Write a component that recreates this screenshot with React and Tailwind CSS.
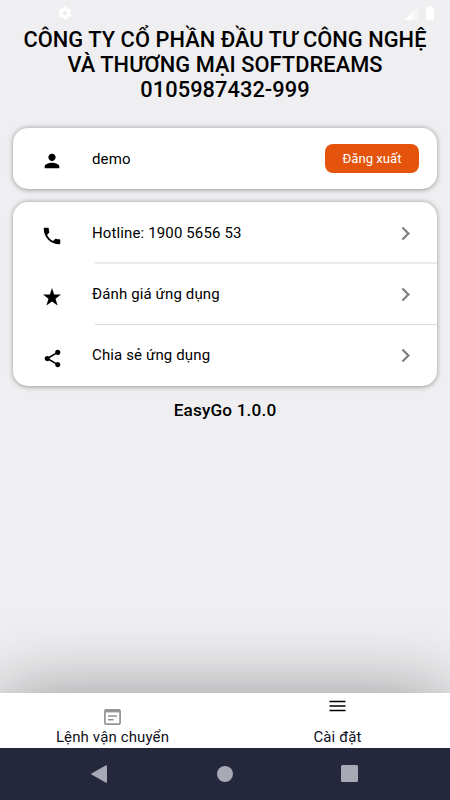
import React from 'react'
import {
  MdSettings,
  MdPerson,
  MdPhone,
  MdShare,
  MdChevronRight,
} from 'react-icons/md'

const StarIcon = () => (
  <svg width="18" height="18" viewBox="0 0 18 18" fill="currentColor">
    <path d="M9 0L11.1 6.5H18L12.5 10.7L14.6 17.6L9 13.4L3.4 17.6L5.5 10.7L0 6.5H6.9Z" />
  </svg>
)

const MENU = [
  { label: 'Hotline: 1900 5656 53', icon: <MdPhone size={22} /> },
  { label: 'Đánh giá ứng dụng', icon: <StarIcon /> },
  { label: 'Chia sẻ ứng dụng', icon: <MdShare size={21} /> },
]

function StatusBar() {
  return (
    <div className="flex h-[27px] items-start justify-between pl-[57px] pr-4 pt-[5px] text-white">
      <MdSettings size={16} />
      <div className="flex items-start gap-2 pt-px">
        <svg width="13" height="14" viewBox="0 0 13 14">
          <path d="M13 0V14H0Z" fill="#fff" fillOpacity="0.4" />
          <path d="M7.5 6V14H0Z" fill="#fff" />
        </svg>
        <svg width="8" height="14" viewBox="0 0 8 14" fill="currentColor">
          <path d="M2.5 0H5.5V1.5H7.2Q8 1.5 8 2.3V13.2Q8 14 7.2 14H0.8Q0 14 0 13.2V2.3Q0 1.5 0.8 1.5H2.5Z" />
        </svg>
      </div>
    </div>
  )
}

function MenuRow({ icon, label, first, last }) {
  return (
    <div className={`flex items-center pr-[18px] ${last ? 'h-[61px]' : 'h-[60px]'} ${first ? 'pt-[2px]' : ''}`}>
      <div className="flex w-[79px] justify-center pr-px pt-1.5">{icon}</div>
      <span className="flex-1 text-[15px] tracking-[0.13px]">{label}</span>
      <MdChevronRight size={27} className="text-[#808080]" />
    </div>
  )
}

function TabBar() {
  return (
    <nav className="flex h-[54.5px] bg-white text-[15px] tracking-[0.13px] text-[#10101c]">
      <div className="flex flex-1 flex-col items-center pt-4">
        <svg width="17" height="16" viewBox="0 0 17 16" fill="none" className="shrink-0 text-[#949494]">
          <rect x="0.9" y="0.9" width="15.2" height="14.2" rx="1.2" stroke="currentColor" strokeWidth="1.7" />
          <path d="M1 0.5H16V3.4H1Z" fill="currentColor" />
          <path d="M4 7H13M4 10.7H9.5" stroke="currentColor" strokeWidth="1.6" />
        </svg>
        <span className="mt-[2px] leading-5">Lệnh vận chuyển</span>
      </div>
      <div className="flex flex-1 flex-col items-center pt-[7px]">
        <svg width="17" height="12" viewBox="0 0 17 12" fill="none" className="shrink-0 text-black">
          <path d="M0.5 1.5H16.5M0.5 6H16.5M0.5 10.5H16.5" stroke="currentColor" strokeWidth="1.4" />
        </svg>
        <span className="mt-[15px] leading-5">Cài đặt</span>
      </div>
    </nav>
  )
}

function SystemNav() {
  return (
    <div className="flex flex-1 items-center justify-between bg-[#25273d] pl-[91px] pr-[92px] text-[#a9a9b5]">
      <svg width="16" height="18" viewBox="0 0 16 18" fill="currentColor">
        <path d="M0.5 8.4L14.6 0.4Q16 -0.2 16 1V17Q16 18.2 14.6 17.6L0.5 9.6Q-0.4 9 0.5 8.4Z" />
      </svg>
      <div className="ml-px size-4 rounded-full bg-current" />
      <div className="size-[17px] rounded-[1.5px] bg-current" />
    </div>
  )
}

export default function App() {
  return (
    <div className="flex h-[800px] w-[450px] flex-col overflow-hidden bg-[#efeff1] font-['Roboto',sans-serif] text-black">
      <main className="h-[693px] shrink-0">
        <StatusBar />
        <h1 className="text-center text-[21.8px] font-medium leading-[25px] tracking-[0.06px]">
          CÔNG TY CỔ PHẦN ĐẦU TƯ CÔNG NGHỆ
          <br />
          VÀ THƯƠNG MẠI SOFTDREAMS
          <br />
          0105987432-999
        </h1>

        <section className="mx-[13px] mt-[26px] flex h-[61px] items-center rounded-[15px] bg-white pr-[18px] shadow-[0_0.5px_5px_rgba(0,0,0,0.36)]">
          <div className="flex w-[79px] justify-center pr-px pt-1">
            <MdPerson size={22} />
          </div>
          <span className="flex-1 pt-[2px] text-[15px] tracking-[0.13px]">demo</span>
          <button className="h-[29px] w-[94px] rounded-[8px] bg-[#e4540c] text-[13.1px] text-white">
            Đăng xuất
          </button>
        </section>

        <section className="mx-[13px] mt-[13px] h-[184px] rounded-[15px] bg-white shadow-[0_0.5px_5px_rgba(0,0,0,0.36)]">
          {MENU.map((item, i) => (
            <React.Fragment key={item.label}>
              {i > 0 && (
                <div className={`ml-[82px] ${i === 1 ? 'h-[2px] bg-[#ebebeb]' : 'h-px bg-[#dadada]'}`} />
              )}
              <MenuRow {...item} first={i === 0} last={i === MENU.length - 1} />
            </React.Fragment>
          ))}
        </section>

        <p className="mt-[13px] text-center text-[17.2px] font-medium leading-[22px] tracking-[0.15px]">
          EasyGo 1.0.0
        </p>
      </main>

      <footer className="flex flex-1 flex-col shadow-[0_0_76px_rgba(0,0,0,0.38)]">
        <TabBar />
        <SystemNav />
      </footer>
    </div>
  )
}
